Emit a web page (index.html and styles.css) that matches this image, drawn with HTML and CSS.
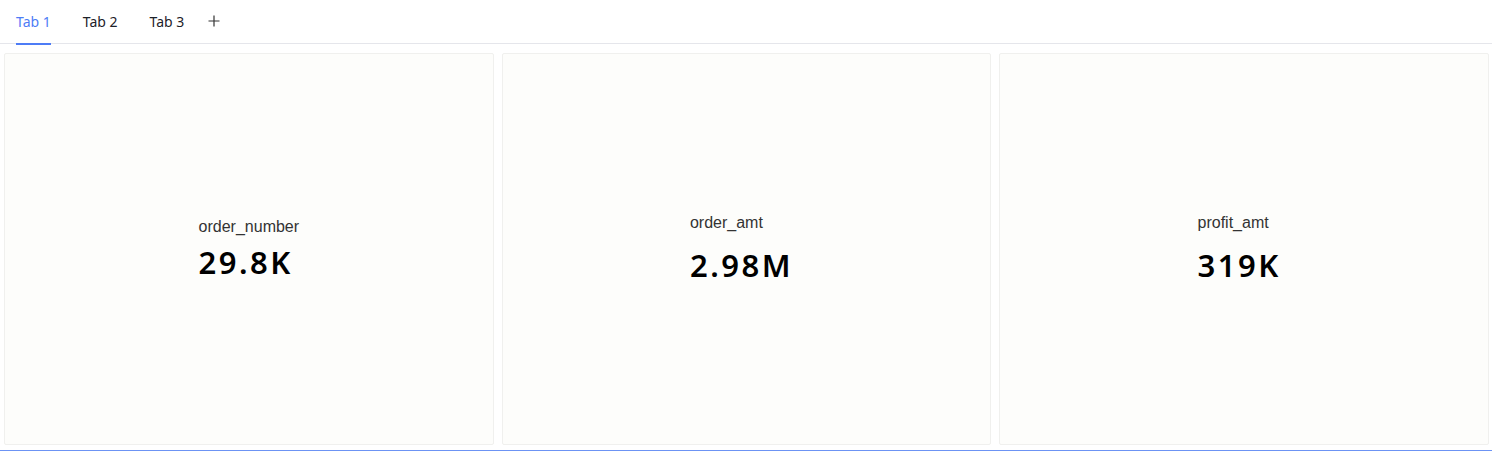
FILE: index.html
```html
<!DOCTYPE html>
<html lang="en">
<head>
  <meta charset="UTF-8">
  <title>Dashboard</title>
  <link rel="stylesheet" href="styles.css">
</head>
<body>
  <div class="tabs">
    <div class="tab active">Tab 1</div>
    <div class="tab">Tab 2</div>
    <div class="tab">Tab 3</div>
    <div class="tab-add">
      <svg width="12" height="12" viewBox="0 0 12 12"><path d="M6 0.5v11M0.5 6h11" stroke="#333" stroke-width="1.2" fill="none"/></svg>
    </div>
  </div>
  <div class="board">
    <div class="card">
      <div class="metric metric-low">
        <div class="metric-label">order_number</div>
        <div class="metric-value">29.8K</div>
      </div>
    </div>
    <div class="card">
      <div class="metric">
        <div class="metric-label">order_amt</div>
        <div class="metric-value">2.98M</div>
      </div>
    </div>
    <div class="card">
      <div class="metric">
        <div class="metric-label">profit_amt</div>
        <div class="metric-value">319K</div>
      </div>
    </div>
  </div>
</body>
</html>
```

FILE: styles.css
```css
body {
  margin: 0;
  font-family: "Noto Sans", sans-serif;
  color: #333;
  background: #fff;
}

.tabs {
  display: flex;
  align-items: center;
  height: 44px;
  padding-left: 16px;
  border-bottom: 1px solid #e5e6eb;
  box-sizing: border-box;
}

.tab {
  position: relative;
  font-size: 14px;
  color: #1d2129;
  margin-right: 32px;
  height: 44px;
  line-height: 44px;
}

.tab.active {
  color: #4e7cf6;
}

.tab.active::after {
  content: "";
  position: absolute;
  left: 0;
  right: 0;
  bottom: -1px;
  height: 2px;
  background: #4e7cf6;
}

.tab-add {
  display: flex;
  align-items: center;
  margin-left: -8px;
  margin-top: -2px;
}

.board {
  display: grid;
  grid-template-columns: repeat(3, 1fr);
  gap: 8px;
  padding: 9px 3px 5px 4px;
  height: 407px;
  box-sizing: border-box;
  border-bottom: 1px solid #6c93f4;
}

.card {
  background: #fdfdfb;
  border: 1px solid #f0f0ee;
  border-radius: 2px;
  display: flex;
  align-items: center;
  justify-content: center;
}

.metric {
  margin-top: 1px;
  margin-right: 10px;
}

.metric .metric-value {
  margin-top: 13px;
}

.metric-low {
  margin-top: 2px;
  margin-right: 0;
}

.metric-low .metric-value {
  margin-top: 6px;
}

.metric-label {
  font-family: "Liberation Sans", Arial, sans-serif;
  font-size: 16px;
  color: #333;
}

.metric-value {
  font-family: "Noto Sans", sans-serif;
  font-weight: 600;
  font-size: 31px;
  color: #000;
  letter-spacing: 2.5px;
  line-height: 40px;
}
```
